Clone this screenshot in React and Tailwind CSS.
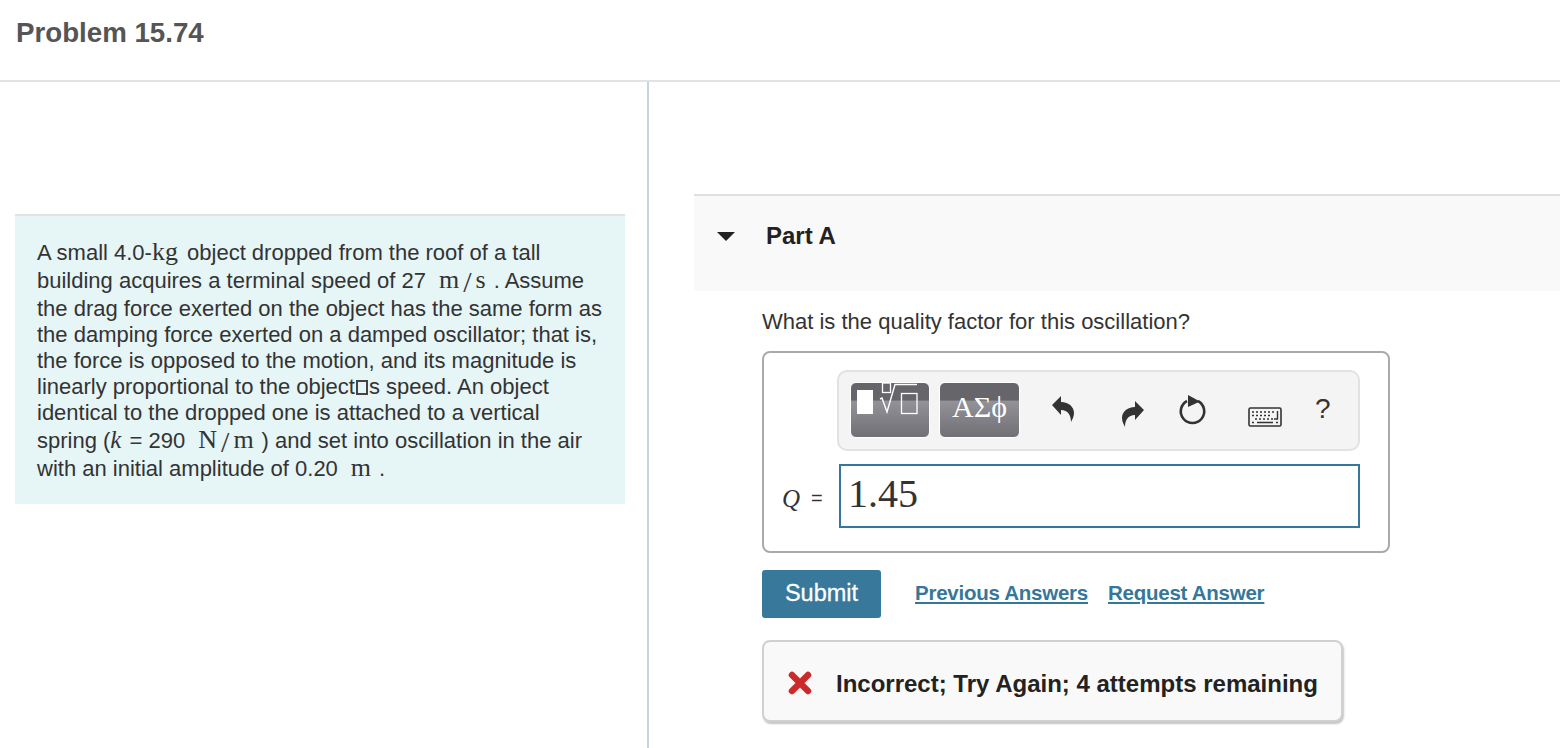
import React from 'react';

const Unit = ({ children }) => (
  <span className="ml-[13px] mr-[8px] inline-block font-['Liberation_Serif',serif] text-[26px] leading-[24px]">{children}</span>
);

const Slash = () => <span className="mx-[4px] inline-block h-[18px] align-[-4px] text-[30px] font-light leading-[18px]">/</span>;

const UndoIcon = () => (
  <svg width="24" height="30" viewBox="0 0 24 30" className="fill-[#333]">
    <path d="M1 10 L10 1 L10 7 C18 7 23 12 23 18 C23 22 21 25 20 27 C20 20 17 15 10 15 L10 20 Z" />
  </svg>
);

const RefreshIcon = () => (
  <svg width="30" height="32" viewBox="0 0 30 32">
    <path d="M9 7 A11.7 11.7 0 1 0 20 7" fill="none" stroke="#333" strokeWidth="2.6" />
    <path d="M10 1 L22 7.5 L10 13 Z" fill="#333" />
  </svg>
);

const KeyboardIcon = () => (
  <svg width="34" height="20" viewBox="0 0 34 20">
    <rect x="1" y="1" width="32" height="18" rx="1.5" fill="#f4f4f4" stroke="#333" strokeWidth="1.6" />
    <path d="M4 5 H27 M4 8.5 H24 M7 12 H25" stroke="#333" strokeWidth="1.6" strokeDasharray="2 2" fill="none" />
    <path d="M29.5 4 V12 H26" stroke="#333" strokeWidth="1.4" fill="none" />
    <path d="M4 15.5 H6 M9 15.5 H25 M28 15.5 H30" stroke="#333" strokeWidth="1.6" />
  </svg>
);

const TemplateIcon = () => (
  <svg width="66" height="54" viewBox="0 0 66 54" className="overflow-visible">
    <rect x="0" y="7" width="16" height="24" fill="#fff" />
    <rect x="25.5" y="0" width="8" height="9.5" fill="none" stroke="#fff" strokeWidth="1.3" />
    <path d="M23 16 L25 15 L30 29 L38 1.5 H60" fill="none" stroke="#fff" strokeWidth="1.4" />
    <rect x="44.5" y="10.5" width="15.5" height="20" fill="none" stroke="#fff" strokeWidth="1.3" />
  </svg>
);

const MathButton = ({ width, children }) => (
  <div className={`flex h-[56px] ${width} items-center justify-center overflow-hidden rounded-[6px] border border-white bg-[linear-gradient(#66666a_0,#66666a_32%,#929298_33%,#707075_100%)]`}>
    {children}
  </div>
);

const lines = [
  [28, <>A small 4.0-<span className="mr-[3px] inline-block font-['Liberation_Serif',serif] text-[26px] leading-[24px]">kg</span> object dropped from the roof of a tall</>],
  [28, <>building acquires a terminal speed of 27<Unit>m<Slash />s</Unit>. Assume</>],
  [26, <>the drag force exerted on the object has the same form as</>],
  [26, <>the damping force exerted on a damped oscillator; that is,</>],
  [26, <>the force is opposed to the motion, and its magnitude is</>],
  [26, <>linearly proportional to the object<span className="mx-px inline-block h-[15px] w-[12px] border-2 border-[#444] align-[-1px]" />s speed. An object</>],
  [28, <>identical to the dropped one is attached to a vertical</>],
  [28, <>spring (<span className="mr-[2px] inline-block font-['Liberation_Serif',serif] text-[25px] italic leading-[24px]">k</span> = 290<Unit>N<Slash />m</Unit>) and set into oscillation in the air</>],
  [26, <>with an initial amplitude of 0.20<Unit>m</Unit>.</>],
];

export default function App() {
  return (
    <div className="flex h-[748px] flex-col overflow-hidden bg-white font-['Liberation_Sans',Arial,sans-serif] text-[#333]">
      <header className="flex h-[82px] shrink-0 items-start border-b-2 border-[#e0e3e6] pl-[16px] pt-[16px]">
        <h1 className="text-[27.7px] font-bold leading-[34px] text-[#555]">Problem 15.74</h1>
      </header>

      <div className="flex flex-1">
        {/* Problem text */}
        <div className="w-[649px] shrink-0 border-r-2 border-[#c5d4e2] pl-[15px] pt-[132px]">
          <div className="h-[290px] w-[610px] border-t-2 border-[#dfe3e3] bg-[#e6f5f6] pl-[22px] pt-[24px] text-[22px]">
            {lines.map(([height, content], i) => (
              <div key={i} className="whitespace-nowrap leading-[26px]" style={{ height }}>{content}</div>
            ))}
          </div>
        </div>

        {/* Part A */}
        <div className="flex-1 pl-[45px] pt-[112px]">
          <div className="flex h-[97px] items-start border-t-2 border-[#dfdfdf] bg-[#f9f9f9] pl-[23px] pt-[26px]">
            <span className="mt-[10px] h-0 w-0 border-x-[9px] border-t-[9px] border-x-transparent border-t-[#222]" />
            <h2 className="ml-[31px] text-[24px] font-bold leading-[28px] text-[#222]">Part A</h2>
          </div>

          <div className="pl-[68px]">
            <p className="mt-[17px] text-[22px] leading-[28px]">What is the quality factor for this oscillation?</p>

            <div className="mt-[15px] h-[202px] w-[628px] rounded-[8px] border-2 border-[#aaaaaa] pl-[73px] pt-[17px]">
              <div className="flex h-[81px] w-[523px] items-center rounded-[10px] border-2 border-[#e2e2e2] bg-[#f4f4f4] pl-[11px]">
                <div className="mb-[2px] flex gap-[9px]">
                  <MathButton width="w-[80px]"><TemplateIcon /></MathButton>
                  <MathButton width="w-[81px]">
                    <span className="mb-[6px] font-['Liberation_Serif',serif] text-[30px] leading-none text-white">ΑΣϕ</span>
                  </MathButton>
                </div>
                <div className="ml-[31px] mb-[2px]"><UndoIcon /></div>
                <div className="ml-[46px] mt-[8px] -scale-x-100"><UndoIcon /></div>
                <div className="ml-[33px] -mt-[1px]"><RefreshIcon /></div>
                <div className="ml-[40px] mt-[13px]"><KeyboardIcon /></div>
                <span className="ml-[33px] mb-[4px] text-[28px] leading-none">?</span>
              </div>

              <div className="mt-[13px] flex items-center">
                <span className="-ml-[55px] mt-[4px] w-[22px] shrink-0 font-['Liberation_Serif',serif] text-[25px] italic leading-none">Q</span>
                <span className="ml-[7px] mt-[4px] w-[28px] shrink-0 text-[20px] leading-none">=</span>
                <div className="flex h-[64px] w-[521px] shrink-0 items-center border-2 border-[#35779a] pl-[7px] font-['Liberation_Serif',serif] text-[40px] leading-none">
                  <span className="-mt-[4px]">1.45</span>
                </div>
              </div>
            </div>

            <div className="mt-[17px] flex items-center">
              <button className="flex h-[48px] w-[119px] items-center justify-center rounded-[3px] bg-[#37789b] text-[23.5px] text-white [-webkit-text-stroke:0.3px_white]">Submit</button>
              <a className="mb-[2px] ml-[34px] text-[20.5px] font-bold tracking-[-0.25px] text-[#35779a] underline">Previous Answers</a>
              <a className="mb-[2px] ml-[20px] text-[20.5px] font-bold tracking-[-0.25px] text-[#35779a] underline">Request Answer</a>
            </div>

            <div className="mt-[22px] flex h-[82px] w-[581px] items-center rounded-[8px] border-2 border-[#d0d0d0] bg-[#f9f9f9] pl-[24px] shadow-[1px_2px_2px_#c4c4c4]">
              <svg width="24" height="24" viewBox="0 0 24 24" className="mt-[4px]">
                <path d="M4 4 L20 20 M20 4 L4 20" stroke="#cc2a2a" strokeWidth="6.5" strokeLinecap="round" />
              </svg>
              <span className="ml-[24px] mt-[5px] whitespace-nowrap text-[24px] font-bold text-[#222]">Incorrect; Try Again; 4 attempts remaining</span>
            </div>
          </div>
        </div>
      </div>
    </div>
  );
}
